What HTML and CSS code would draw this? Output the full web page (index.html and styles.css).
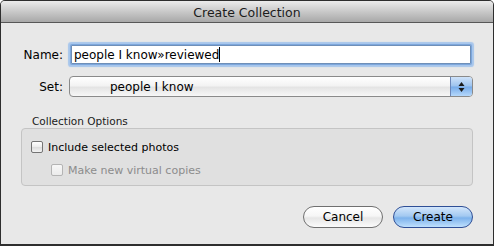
FILE: index.html
```html
<!DOCTYPE html>
<html>
<head>
<meta charset="utf-8">
<link rel="stylesheet" href="styles.css">
</head>
<body>
<div class="window">
  <div class="titlebar">Create Collection</div>
  <div class="content">
    <div class="form">
      <label class="label">Name:</label>
      <div class="field"><span class="value">people I know»reviewed</span><span class="caret"></span></div>
      <label class="label set-label">Set:</label>
      <div class="popup">
        <span class="popup-text">people I know</span>
        <span class="stepper">
          <svg width="7" height="12" viewBox="0 0 7 12"><path d="M3.5 1 L6.5 5 L0.5 5 Z M3.5 11 L0.5 7 L6.5 7 Z" fill="#1a1a1a"/></svg>
        </span>
      </div>
    </div>
    <div class="group-title">Collection Options</div>
    <div class="group">
      <div class="option"><span class="check"></span><span>Include selected photos</span></div>
      <div class="option sub disabled"><span class="check"></span><span>Make new virtual copies</span></div>
    </div>
    <div class="buttons">
      <button class="btn">Cancel</button>
      <button class="btn primary">Create</button>
    </div>
  </div>
</div>
</body>
</html>
```
FILE: styles.css
```css
html, body {
  margin: 0;
  padding: 0;
  background: #ffffff;
}
body {
  font-family: "DejaVu Sans", "Liberation Sans", sans-serif;
  font-size: 12px;
  color: #000;
}
.window {
  width: 494px;
  height: 246px;
  box-sizing: border-box;
  border: 1px solid #2e2e2e;
  border-bottom-width: 2px;
  border-radius: 5px 5px 0 0;
  background: #e8e8e8;
  display: flex;
  flex-direction: column;
  overflow: hidden;
}
.titlebar {
  height: 21px;
  flex: none;
  border-bottom: 1px solid #575757;
  background: linear-gradient(#ececec, #c9c9c9 50%, #a8a8a8);
  text-align: center;
  font-size: 12.5px;
  line-height: 23px;
  color: #1c1c1c;
}
.content {
  padding: 22px 20px 0 20px;
  display: flex;
  flex-direction: column;
}
.form {
  display: grid;
  grid-template-columns: 42px 1fr;
  column-gap: 6px;
  row-gap: 12px;
  align-items: center;
}
.label {
  text-align: right;
  font-size: 12px;
}
.field {
  margin: 0 2px;
  height: 19px;
  box-sizing: border-box;
  background: #fff;
  border: 1px solid #6f8fb8;
  box-shadow: 0 0 0 1px #7da7dc, 0 0 1px 3px #a7c6ec;
  border-radius: 1px;
  display: flex;
  align-items: center;
  padding-left: 2px;
  font-size: 12px;
}
.caret {
  display: inline-block;
  width: 1px;
  height: 15px;
  background: #000;
  margin-left: 0;
}
.popup {
  height: 21px;
  box-sizing: border-box;
  border: 1px solid #8a8a8a;
  border-radius: 4px;
  background: linear-gradient(#ffffff, #f3f3f3 45%, #e4e4e4 55%, #f7f7f7);
  display: flex;
  align-items: center;
  overflow: hidden;
  font-size: 12px;
}
.popup-text {
  flex: 1;
  padding-left: 40px;
}
.stepper {
  width: 21px;
  height: 100%;
  border-left: 1px solid #6b86b8;
  background: linear-gradient(#cfe3fa, #9cc3ee 48%, #76abe9 52%, #b5d8fb);
  display: flex;
  align-items: center;
  justify-content: center;
}
.group-title {
  margin-top: 17px;
  padding-left: 11px;
  font-size: 10.5px;
  line-height: 14px;
  color: #1a1a1a;
}
.group {
  height: 58px;
  box-sizing: border-box;
  border: 1px solid #c4c4c4;
  border-radius: 4px;
  background: #e0e0e0;
  padding: 11px 9px 0 9px;
  display: flex;
  flex-direction: column;
  gap: 9px;
}
.option {
  display: flex;
  align-items: center;
  gap: 5px;
  height: 14px;
  font-size: 11px;
}
.check {
  width: 12px;
  height: 12px;
  box-sizing: border-box;
  border: 1px solid #747474;
  border-radius: 2px;
  background: linear-gradient(#ffffff, #ececec 50%, #dedede 55%, #f3f3f3);
  flex: none;
}
.sub {
  padding-left: 20px;
}
.disabled {
  color: #8c8c8c;
}
.disabled .check {
  border-color: #b4b4b4;
  background: linear-gradient(#f7f7f7, #ebebeb);
}
.buttons {
  margin-top: 20px;
  display: flex;
  justify-content: flex-end;
  gap: 10px;
}
.btn {
  width: 80px;
  height: 22px;
  box-sizing: border-box;
  border-radius: 11px;
  border: 1px solid #707070;
  background: linear-gradient(#ffffff, #f6f6f6 45%, #e6e6e6 55%, #fbfbfb);
  font-family: "DejaVu Sans", "Liberation Sans", sans-serif;
  font-size: 12px;
  color: #000;
  padding: 0;
}
.btn.primary {
  border-color: #2f4f96;
  background: linear-gradient(#d3e6fb, #a3c9f1 45%, #7db2ec 55%, #bfe0fd);
}
```
